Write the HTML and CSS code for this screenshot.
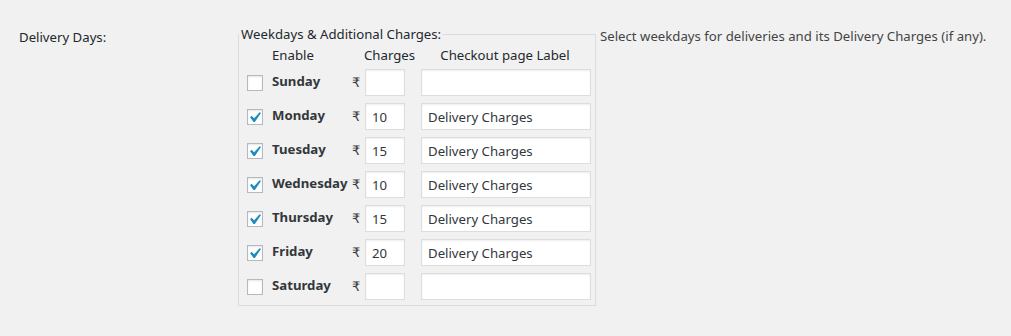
FILE: index.html
```html
<!DOCTYPE html>
<html>

<head>
    <link rel="stylesheet" href="styles.css">
</head>

<body>

    <div class="setting-row">
        <div class="setting-label">Delivery Days:</div>

        <fieldset class="days-box">
            <legend>Weekdays &amp; Additional Charges:</legend>

            <div class="days-grid">
                <span></span>
                <span class="head">Enable</span>
                <span></span>
                <span class="head head-charges">Charges</span>
                <span class="head head-label">Checkout page Label</span>

                <span class="check"></span>
                <label class="day">Sunday</label>
                <span class="rupee">₹</span>
                <span class="cell"><input class="charge" value=""></span>
                <input class="page-label" value="">

                <span class="check"><svg viewBox="0 0 20 20"><path d="M14.83 4.89l1.34.94-5.81 8.38H9.02L5.78 9.67l1.34-1.25 2.57 2.4z"/></svg></span>
                <label class="day">Monday</label>
                <span class="rupee">₹</span>
                <span class="cell"><input class="charge" value="10"></span>
                <input class="page-label" value="Delivery Charges">

                <span class="check"><svg viewBox="0 0 20 20"><path d="M14.83 4.89l1.34.94-5.81 8.38H9.02L5.78 9.67l1.34-1.25 2.57 2.4z"/></svg></span>
                <label class="day">Tuesday</label>
                <span class="rupee">₹</span>
                <span class="cell"><input class="charge" value="15"></span>
                <input class="page-label" value="Delivery Charges">

                <span class="check"><svg viewBox="0 0 20 20"><path d="M14.83 4.89l1.34.94-5.81 8.38H9.02L5.78 9.67l1.34-1.25 2.57 2.4z"/></svg></span>
                <label class="day">Wednesday</label>
                <span class="rupee">₹</span>
                <span class="cell"><input class="charge" value="10"></span>
                <input class="page-label" value="Delivery Charges">

                <span class="check"><svg viewBox="0 0 20 20"><path d="M14.83 4.89l1.34.94-5.81 8.38H9.02L5.78 9.67l1.34-1.25 2.57 2.4z"/></svg></span>
                <label class="day">Thursday</label>
                <span class="rupee">₹</span>
                <span class="cell"><input class="charge" value="15"></span>
                <input class="page-label" value="Delivery Charges">

                <span class="check"><svg viewBox="0 0 20 20"><path d="M14.83 4.89l1.34.94-5.81 8.38H9.02L5.78 9.67l1.34-1.25 2.57 2.4z"/></svg></span>
                <label class="day">Friday</label>
                <span class="rupee">₹</span>
                <span class="cell"><input class="charge" value="20"></span>
                <input class="page-label" value="Delivery Charges">

                <span class="check"></span>
                <label class="day">Saturday</label>
                <span class="rupee">₹</span>
                <span class="cell"><input class="charge" value=""></span>
                <input class="page-label" value="">
            </div>
        </fieldset>

        <p class="description">Select weekdays for deliveries and its Delivery Charges (if any).</p>
    </div>

</body>

</html>
```

FILE: styles.css
```css
body {
    margin: 0;
    background-color: #f1f1f1;
    color: #23282d;
    font-family: "Noto Sans", Arial, sans-serif;
    font-size: 13.2px;
}

.setting-row {
    display: flex;
    align-items: flex-start;
    padding: 25px 0 0 19px;
}

.setting-label {
    width: 219px;
    margin-top: 3px;
    line-height: 19px;
}

.days-box {
    width: 358px;
    box-sizing: border-box;
    margin: 0;
    padding: 0 4px 5px 8px;
    border: 1px solid #dcdcdc;
}

.days-box legend {
    padding: 0 2px;
    margin-left: -8px;
    line-height: 19px;
}

.days-grid {
    display: grid;
    grid-template-columns: 25px 80px 13px 56px 170px;
    grid-template-rows: 20px;
    grid-auto-rows: 27px;
    row-gap: 7px;
    align-items: center;
    margin-top: -2px;
}

.head {
    align-self: end;
    line-height: 19px;
    margin-bottom: -3px;
}

.head-charges {
    margin-left: -1px;
}

.head-label {
    text-align: center;
    padding-right: 2px;
}

.check {
    display: block;
    width: 16px;
    height: 16px;
    box-sizing: border-box;
    border: 1px solid #b4b9be;
    background-color: #fff;
    box-shadow: inset 0 1px 2px rgba(0, 0, 0, 0.1);
}

.check svg {
    display: block;
    width: 21px;
    height: 21px;
    margin: -3px 0 0 -4px;
    fill: #1e8cbe;
}

.day {
    font-weight: bold;
    color: #32373c;
    margin-top: -3px;
}

.rupee {
    font-family: "DejaVu Sans", sans-serif;
    font-size: 13px;
    color: #32373c;
}

.cell {
    display: flex;
}

.charge,
.page-label {
    height: 27px;
    box-sizing: border-box;
    margin: 0;
    padding: 0 6px;
    border: 1px solid #ddd;
    background-color: #fff;
    box-shadow: inset 0 1px 2px rgba(0, 0, 0, 0.07);
    font-family: "Noto Sans", Arial, sans-serif;
    font-size: 13.2px;
    color: #32373c;
    outline: none;
}

.charge {
    width: 40px;
}

.page-label {
    width: 170px;
}

.description {
    margin: 2px 0 0 4px;
    line-height: 19px;
    color: #444;
}
```
